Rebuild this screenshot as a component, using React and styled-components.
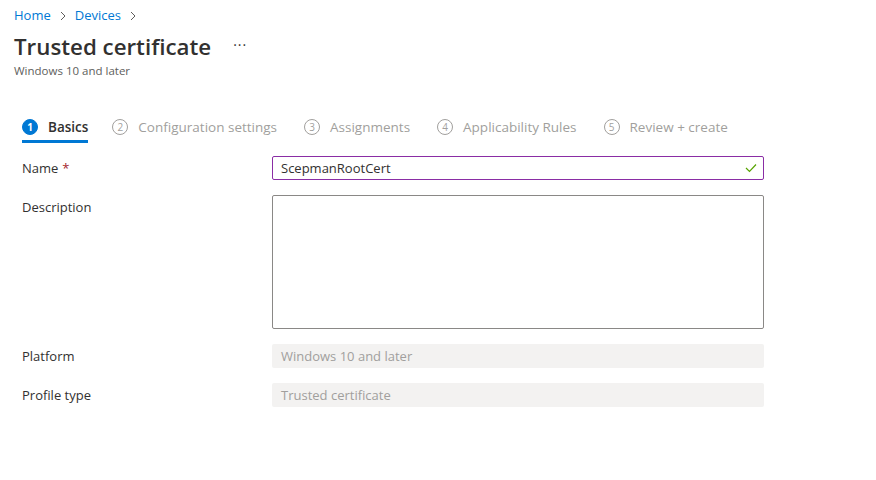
import React from "react";
import styled, { createGlobalStyle } from "styled-components";

const GlobalStyle = createGlobalStyle`
  body {
    margin: 0;
    background: #ffffff;
    font-family: "Segoe UI", "Open Sans", "Noto Sans", sans-serif;
    color: #323130;
  }
`;

const Page = styled.div`
  width: 876px;
  height: 480px;
  padding: 5px 0 0 14px;
  box-sizing: border-box;
`;

const Breadcrumb = styled.nav`
  display: flex;
  align-items: center;
  gap: 6px;
  font-size: 13px;
  line-height: 20px;
`;

const Crumb = styled.a`
  color: #0078d4;
  text-decoration: none;
`;

const Chevron = styled.svg`
  width: 12px;
  height: 12px;
  margin-top: 1px;
`;

const TitleRow = styled.div`
  display: flex;
  align-items: center;
  gap: 22px;
  margin-top: 8px;
`;

const Title = styled.h1`
  margin: 0;
  font-size: 22.3px;
  line-height: 28px;
  font-weight: 600;
  color: #323130;
`;

const More = styled.span`
  font-size: 14px;
  color: #323130;
  letter-spacing: 1px;
  margin-top: -6px;
`;

const Subtitle = styled.div`
  margin-top: 2px;
  font-size: 11.5px;
  line-height: 16px;
  color: #605e5c;
`;

const Steps = styled.div`
  display: flex;
  gap: 27px;
  margin-top: 35px;
  padding-left: 8px;
`;

const Step = styled.div`
  display: flex;
  align-items: center;
  gap: 10px;
  height: 29px;
  box-sizing: border-box;
  border-bottom: 3px solid ${(p) => (p.$active ? "#0078d4" : "transparent")};
  font-size: 13.5px;
  color: ${(p) => (p.$active ? "#323130" : "#a19f9d")};
  font-weight: ${(p) => (p.$active ? 600 : 400)};
  &:first-child {
    margin-right: -3px;
  }
`;

const StepNum = styled.span`
  width: 16px;
  height: 16px;
  box-sizing: border-box;
  border-radius: 50%;
  display: flex;
  align-items: center;
  justify-content: center;
  font-size: 10px;
  font-weight: ${(p) => (p.$active ? 700 : 400)};
  background: ${(p) => (p.$active ? "#0078d4" : "transparent")};
  color: ${(p) => (p.$active ? "#ffffff" : "#a19f9d")};
  border: 1px solid ${(p) => (p.$active ? "#0078d4" : "#a19f9d")};
`;

const Form = styled.div`
  display: flex;
  flex-direction: column;
  gap: 15px;
  margin-top: 13px;
  padding-left: 8px;
`;

const Row = styled.div`
  display: grid;
  grid-template-columns: 250px 492px;
  align-items: start;
`;

const Label = styled.label`
  font-size: 13px;
  line-height: 24px;
  color: #323130;
`;

const Required = styled.span`
  color: #a4262c;
  margin-left: 4px;
`;

const InputBox = styled.div`
  height: 24px;
  box-sizing: border-box;
  border: 1px solid #8a2da5;
  border-radius: 2px;
  display: flex;
  align-items: center;
  justify-content: space-between;
  padding: 0 6px 0 8px;
  font-size: 13px;
  color: #323130;
`;

const TextArea = styled.div`
  height: 134px;
  box-sizing: border-box;
  border: 1px solid #8a8886;
  border-radius: 2px;
`;

const Disabled = styled.div`
  height: 24px;
  box-sizing: border-box;
  background: #f3f2f1;
  border-radius: 2px;
  display: flex;
  align-items: center;
  padding: 0 9px;
  font-size: 13px;
  color: #a19f9d;
`;

const steps = [
  "Basics",
  "Configuration settings",
  "Assignments",
  "Applicability Rules",
  "Review + create",
];

const ChevronIcon = () => (
  <Chevron viewBox="0 0 12 12">
    <path d="M4 2 L8 6 L4 10" fill="none" stroke="#605e5c" strokeWidth="1" />
  </Chevron>
);

const App = () => {
  return (
    <>
      <GlobalStyle />
      <Page>
        <Breadcrumb>
          <Crumb>Home</Crumb>
          <ChevronIcon />
          <Crumb>Devices</Crumb>
          <ChevronIcon />
        </Breadcrumb>
        <TitleRow>
          <Title>Trusted certificate</Title>
          <More>···</More>
        </TitleRow>
        <Subtitle>Windows 10 and later</Subtitle>

        <Steps>
          {steps.map((s, i) => (
            <Step key={s} $active={i === 0}>
              <StepNum $active={i === 0}>{i + 1}</StepNum>
              {s}
            </Step>
          ))}
        </Steps>

        <Form>
          <Row>
            <Label>
              Name<Required>*</Required>
            </Label>
            <InputBox>
              ScepmanRootCert
              <svg width="12" height="10" viewBox="0 0 12 10">
                <path d="M1 5 L4.5 8.5 L11 1.5" fill="none" stroke="#57a300" strokeWidth="1.2" />
              </svg>
            </InputBox>
          </Row>
          <Row>
            <Label>Description</Label>
            <TextArea />
          </Row>
          <Row>
            <Label>Platform</Label>
            <Disabled>Windows 10 and later</Disabled>
          </Row>
          <Row>
            <Label>Profile type</Label>
            <Disabled>Trusted certificate</Disabled>
          </Row>
        </Form>
      </Page>
    </>
  );
};

export default App;
